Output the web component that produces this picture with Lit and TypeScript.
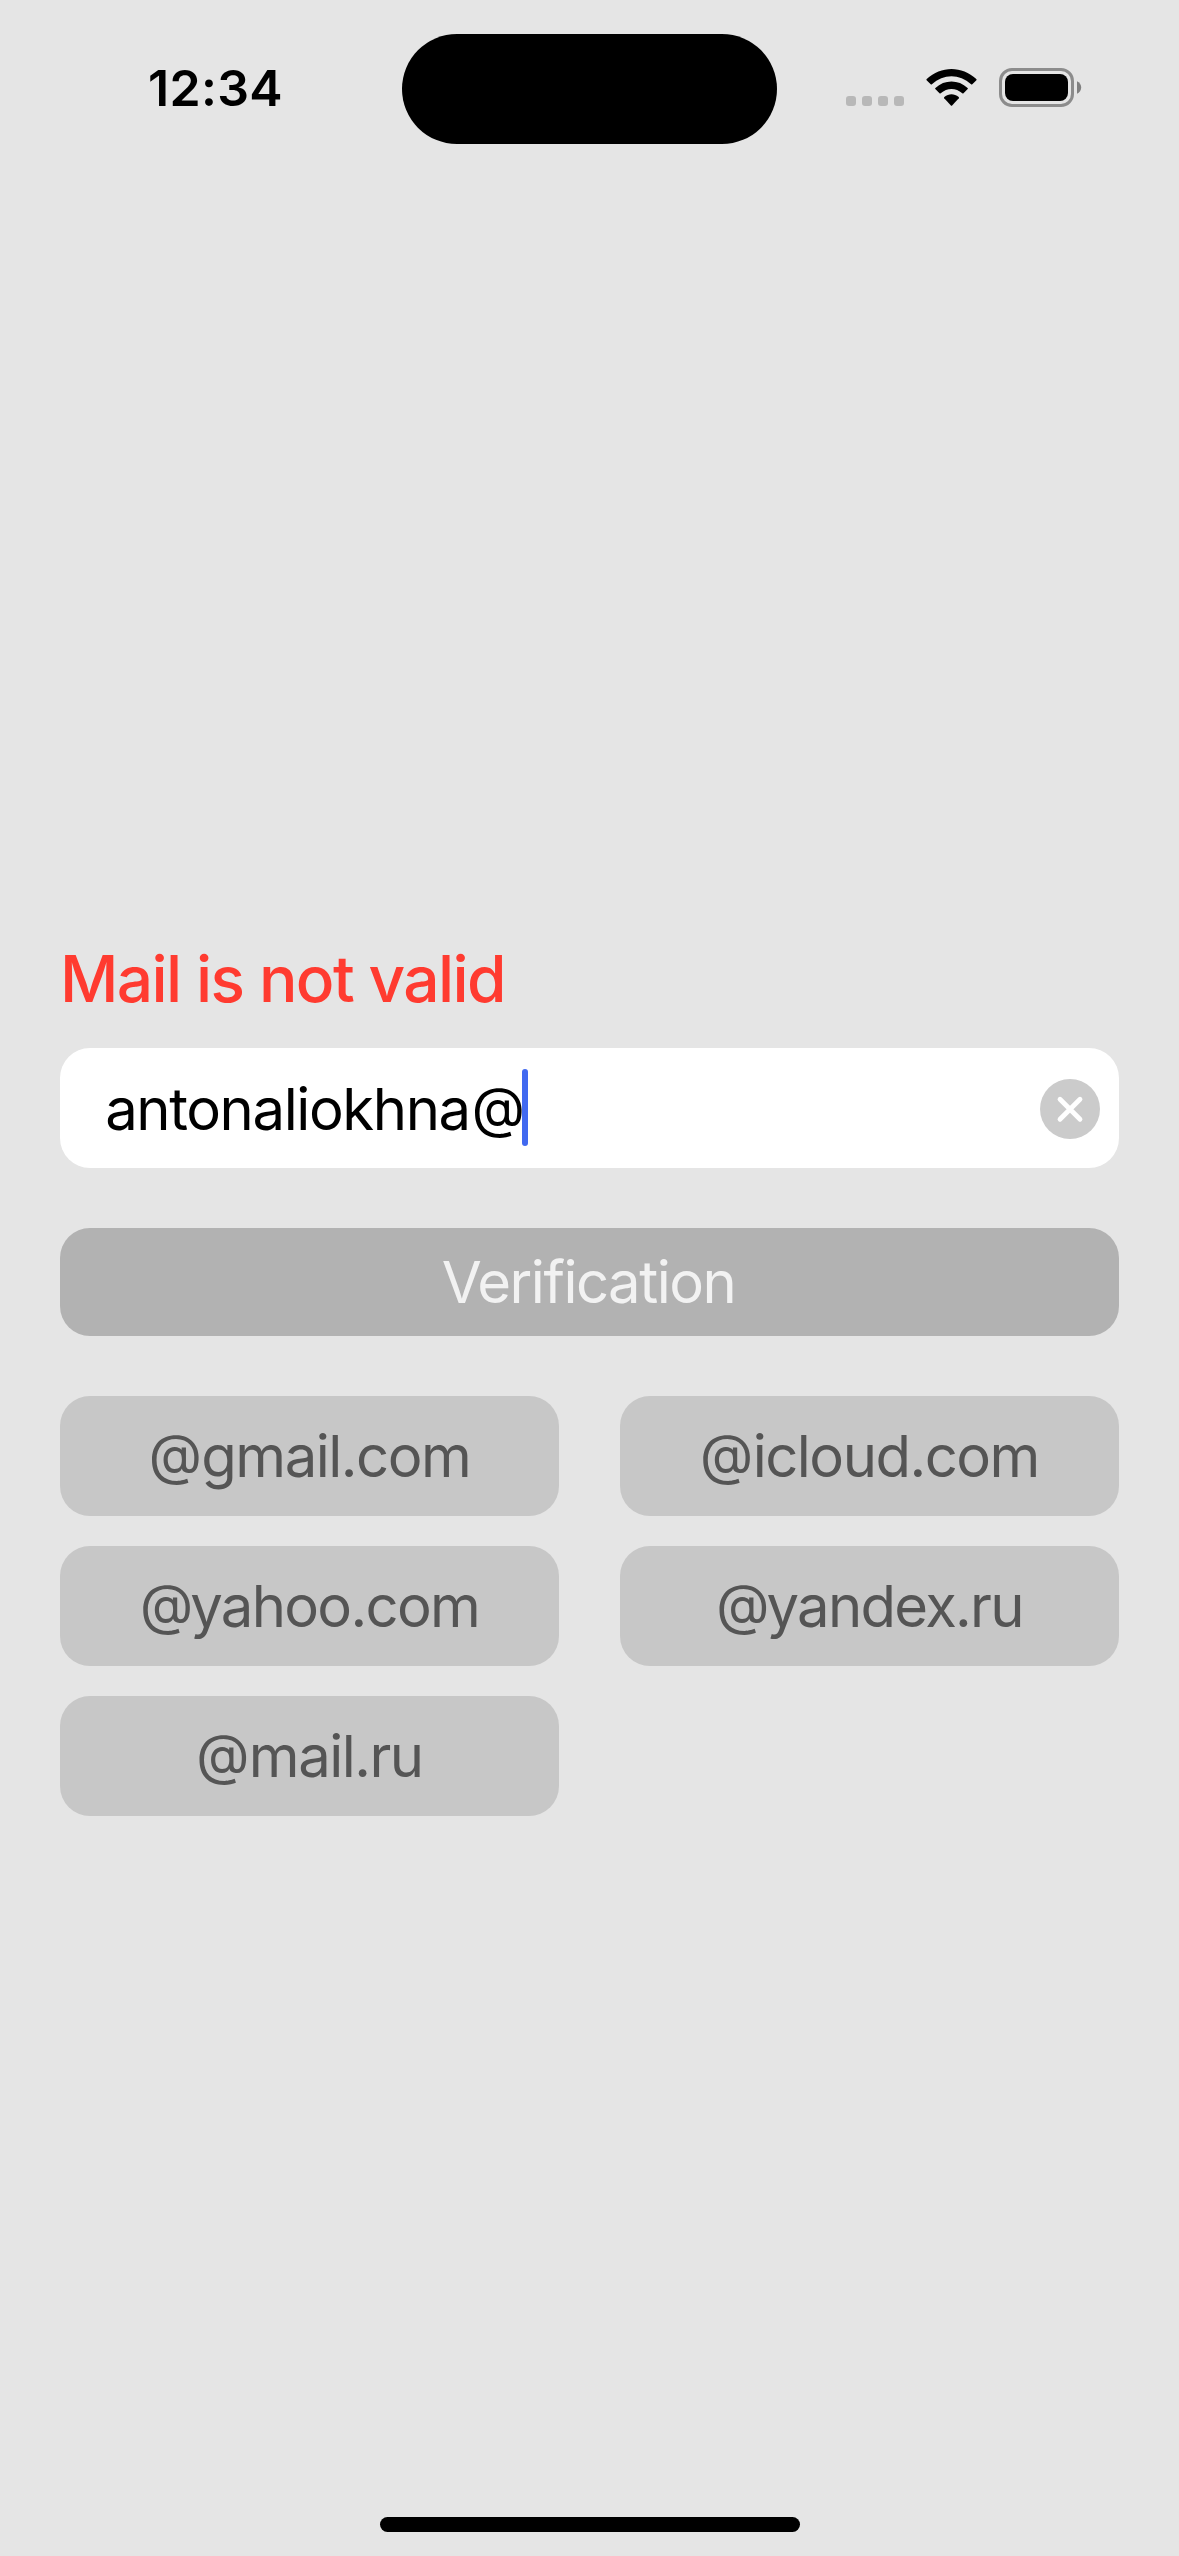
import { LitElement, html, css } from "lit";
import { customElement, property } from "lit/decorators.js";
import { classMap } from "lit/directives/class-map.js";

@customElement("status-bar")
class StatusBar extends LitElement {
  static styles = css`
    :host { display: block; height: 178px; flex: none; }
    .bar { display: flex; height: 100%; align-items: flex-start; }
    .time {
      box-sizing: border-box; width: 401.7px; padding: 58px 0 0 148px;
      font-size: 50px; line-height: 60px; font-weight: 600; letter-spacing: 0.3px; color: #000;
      white-space: nowrap;
    }
    .island { width: 375.6px; height: 110.7px; margin-top: 33.6px; border-radius: 56px; background: #000; flex: none; }
    .icons { margin: 60px 0 0 62.7px; width: 250px; height: 54px; flex: none; display: block; }
  `;
  render() {
    return html`<div class="bar">
      <div class="time">12:34</div>
      <div class="island"></div>
      <svg class="icons" viewBox="840 60 250 54">
        <g fill="#b8b8b8">
          <rect x="846" y="96" width="10" height="10" rx="3"></rect>
          <rect x="862" y="96" width="10" height="10" rx="3"></rect>
          <rect x="878" y="96" width="10" height="10" rx="3"></rect>
          <rect x="894" y="96" width="10" height="10" rx="3"></rect>
        </g>
        <g fill="#000">
          <path d="M926.6 80.2Q926.1 79.6 926.7 79C941 65.5 962 65.5 976.3 79Q976.9 79.6 976.4 80.2L972.3 84.3Q971.7 84.8 971.1 84.3C959.5 73.5 943.5 73.5 931.9 84.3Q931.3 84.8 930.7 84.3Z"></path>
          <path d="M935.3 89.1Q934.8 88.5 935.4 88C944.5 79.4 958.5 79.4 967.6 88Q968.2 88.5 967.7 89.1L963.5 93.3Q962.9 93.8 962.3 93.3C955.8 87.6 947.2 87.6 940.7 93.3Q940.1 93.8 939.5 93.3Z"></path>
          <path d="M944.2 98.2Q943.7 97.6 944.3 97C948.9 93.4 954.1 93.4 958.7 97Q959.3 97.6 958.8 98.2L952.1 105.4Q951.5 106 950.9 105.4Z"></path>
        </g>
        <rect x="1000.5" y="69.5" width="72" height="36" rx="11.5" fill="none" stroke="#8c8c8c" stroke-width="3"></rect>
        <rect x="1005" y="74" width="63" height="27" rx="8" fill="#000"></rect>
        <path d="M1077 81.3C1079.5 82.4 1081.2 84.7 1081.2 87.5S1079.5 92.6 1077 93.7Z" fill="#808080"></path>
      </svg>
    </div>`;
  }
}

@customElement("mail-field")
class MailField extends LitElement {
  @property() value = "";
  static styles = css`
    :host { display: block; }
    .field {
      box-sizing: border-box; height: 120px; border-radius: 30px; background: #fff;
      display: flex; align-items: center; padding: 2px 19px 0 45.2px;
    }
    .value { font-size: 58px; line-height: 72px; height: 72px; letter-spacing: -1.4px; color: #000; white-space: nowrap; }
    .at { font-size: 55px; line-height: 1; vertical-align: 3.5px; letter-spacing: 0; margin-left: 2px; }
    .caret { width: 6px; height: 77px; border-radius: 3px; background: #4169f0; margin: -3px auto 0 -3px; flex: none; }
    .clear { width: 60px; height: 60px; display: block; flex: none; }
  `;
  render() {
    const [name, ...rest] = this.value.split("@");
    return html`<div class="field">
      <span class="value">${name}${rest.length ? html`<span class="at">@</span>${rest.join("@")}` : ""}</span><span class="caret"></span>
      <svg class="clear" viewBox="0 0 60 60">
        <circle cx="30" cy="30" r="30" fill="#cbcbcb"></circle>
        <path d="M20 20.3L40 40.3M40 20.3L20 40.3" stroke="#fff" stroke-width="4.8" stroke-linecap="round"></path>
      </svg>
    </div>`;
  }
}

@customElement("app-root")
class AppRoot extends LitElement {
  private domains = ["gmail.com", "icloud.com", "yahoo.com", "yandex.ru", "mail.ru"];

  static styles = css`
    :host {
      display: flex; flex-direction: column; box-sizing: border-box; width: 1179px; height: 2556px;
      background: #e5e5e5; font-family: Inter, "Liberation Sans", sans-serif; overflow: hidden;
    }
    .form { flex: 1; padding: 761px 60px 0; display: flex; flex-direction: column; }
    .status {
      font-size: 64px; line-height: 80px; font-weight: 500; letter-spacing: -1.6px; color: #ff3b30;
      white-space: nowrap; margin-bottom: 29px;
    }
    .verify {
      height: 108px; margin: 60px 0; border: 0; padding: 0 2px 0 0; border-radius: 30px; background: #b2b2b2;
      color: #f2f2f2; font: 400 58px/72px Inter, "Liberation Sans", sans-serif; letter-spacing: -1.5px;
    }
    .domains { display: grid; grid-template-columns: 1fr 1fr; gap: 30px 61px; }
    .domain {
      height: 120px; border: 0; padding: 0; border-radius: 30px; background: #c7c7c7;
      color: #555; font: 400 58px/72px Inter, "Liberation Sans", sans-serif; letter-spacing: -1.5px;
    }
    .label { display: block; height: 72px; white-space: nowrap; }
    .at { font-size: 55px; line-height: 1; vertical-align: 3.5px; letter-spacing: -0.6px; }
    .kern { letter-spacing: -1.7px; }
    .kern .at { letter-spacing: -2.8px; }
    .home { width: 420px; height: 15px; border-radius: 7.5px; background: #000; margin: 0 auto 24px 380px; flex: none; }
  `;
  render() {
    return html`
      <status-bar></status-bar>
      <div class="form">
        <div class="status">Mail is not valid</div>
        <mail-field value="antonaliokhna@"></mail-field>
        <button class="verify">Verification</button>
        <div class="domains">
          ${this.domains.map(
            (d) => html`<button class=${classMap({ domain: true, kern: d.startsWith("y") })}><span class="label"><span class="at">@</span>${d}</span></button>`
          )}
        </div>
      </div>
      <div class="home"></div>
    `;
  }
}
